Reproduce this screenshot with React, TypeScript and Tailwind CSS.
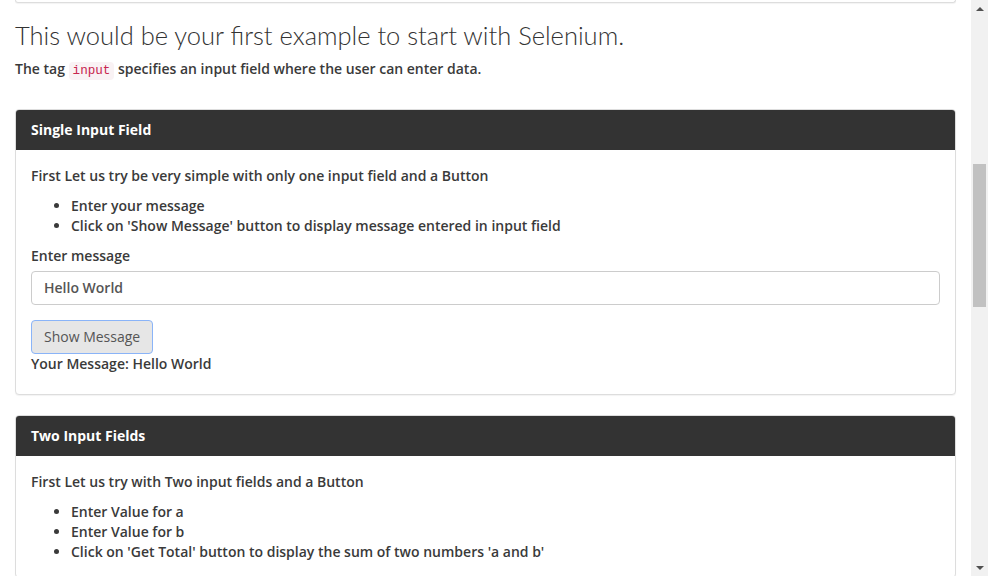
const font = { fontFamily: '"Open Sans", Lato, sans-serif' }

function Card({ title, children }: { title: string; children: React.ReactNode }) {
  return (
    <div className="rounded border border-[#dddddd] bg-white shadow-[0_1px_1px_rgba(0,0,0,0.05)]">
      <div className="flex h-[40px] items-center rounded-t-[3px] bg-[#333333] px-[15px] pb-[1px] text-[14px] font-bold text-white">
        {title}
      </div>
      <div className="p-[15px] text-[14px] leading-[20px] font-semibold text-[#3a3a3a]">{children}</div>
    </div>
  )
}

function Scrollbar() {
  return (
    <div className="flex h-[576px] w-[17px] shrink-0 flex-col items-center bg-[#f1f1f1]">
      <div className="flex h-[17px] items-center justify-center">
        <div className="h-0 w-0 border-x-[4px] border-b-[4px] border-x-transparent border-b-[#505050]" />
      </div>
      <div className="mt-[147px] h-[143px] w-[13px] bg-[#c1c1c1]" />
      <div className="flex-1" />
      <div className="flex h-[17px] items-center justify-center">
        <div className="h-0 w-0 border-x-[4px] border-t-[4px] border-x-transparent border-t-[#505050]" />
      </div>
    </div>
  )
}

export default function App() {
  return (
    <div className="flex h-[576px] w-[988px] overflow-hidden bg-white" style={font}>
      <div className="flex-1 overflow-hidden px-[15px]">
        {/* tail of previous panel */}
        <div className="h-[3px] rounded-b border-x border-b border-[#dddddd] shadow-[0_1px_1px_rgba(0,0,0,0.05)]" />

        <h3 className="mt-[17px] font-['Lato',sans-serif] text-[25.5px] leading-[30px] font-light text-[#333333]">
          This would be your first example to start with Selenium.
        </h3>
        <p className="mt-[9px] text-[14px] leading-[20px] font-semibold text-[#3a3a3a]">
          The tag{' '}
          <code className="rounded bg-[#f9f2f4] px-[4px] py-[2px] font-['Liberation_Mono',monospace] text-[12.6px] font-normal text-[#c7254e]">
            input
          </code>{' '}
          specifies an input field where the user can enter data.
        </p>

        <div className="mt-[28px]">
          <Card title="Single Input Field">
            <p className="mt-[1px]">First Let us try be very simple with only one input field and a Button</p>
            <ul className="mt-[10px] list-disc pl-[40px]">
              <li>Enter your message</li>
              <li>Click on 'Show Message' button to display message entered in input field</li>
            </ul>
            <label className="mt-[10px] block">Enter message</label>
            <div className="mt-[5px] flex h-[34px] items-center rounded border border-[#cccccc] px-[12px] text-[#555555]">
              Hello World
            </div>
            <button className="mt-[15px] flex h-[34px] items-center rounded border border-[#8ab4f8] bg-[#e6e6e6] px-[12px] font-normal text-[#555555]">
              Show Message
            </button>
            <div>Your Message: Hello World</div>
            <div className="h-[5px]" />
          </Card>
        </div>

        <div className="mt-[20px]">
          <Card title="Two Input Fields">
            <p className="mt-[1px]">First Let us try with Two input fields and a Button</p>
            <ul className="mt-[10px] list-disc pl-[40px]">
              <li>Enter Value for a</li>
              <li>Enter Value for b</li>
              <li>Click on 'Get Total' button to display the sum of two numbers 'a and b'</li>
            </ul>
          </Card>
        </div>
      </div>
      <Scrollbar />
    </div>
  )
}
